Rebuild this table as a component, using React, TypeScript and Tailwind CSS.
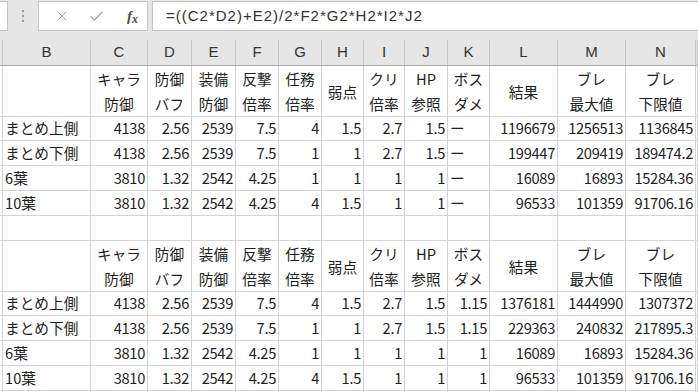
import { Check, X } from "lucide-react";

type Cell = string | [string, string];

const cols =
  "grid grid-cols-[3px_88px_57px_44px_44px_43px_43px_42px_41px_43px_42px_68px_68px_70px_1fr]";

const letters = ["", "B", "C", "D", "E", "F", "G", "H", "I", "J", "K", "L", "M", "N", ""];

const heads: Cell[] = [
  ["キャラ", "防御"],
  ["防御", "バフ"],
  ["装備", "防御"],
  ["反撃", "倍率"],
  ["任務", "倍率"],
  "弱点",
  ["クリ", "倍率"],
  ["HP", "参照"],
  ["ボス", "ダメ"],
  "結果",
  ["ブレ", "最大値"],
  ["ブレ", "下限値"],
];

const table1 = [
  ["まとめ上側", "4138", "2.56", "2539", "7.5", "4", "1.5", "2.7", "1.5", "ー", "1196679", "1256513", "1136845"],
  ["まとめ下側", "4138", "2.56", "2539", "7.5", "1", "1", "2.7", "1.5", "ー", "199447", "209419", "189474.2"],
  ["6葉", "3810", "1.32", "2542", "4.25", "1", "1", "1", "1", "ー", "16089", "16893", "15284.36"],
  ["10葉", "3810", "1.32", "2542", "4.25", "4", "1.5", "1", "1", "ー", "96533", "101359", "91706.16"],
];

const table2 = [
  ["まとめ上側", "4138", "2.56", "2539", "7.5", "4", "1.5", "2.7", "1.5", "1.15", "1376181", "1444990", "1307372"],
  ["まとめ下側", "4138", "2.56", "2539", "7.5", "1", "1", "2.7", "1.5", "1.15", "229363", "240832", "217895.3"],
  ["6葉", "3810", "1.32", "2542", "4.25", "1", "1", "1", "1", "1", "16089", "16893", "15284.36"],
  ["10葉", "3810", "1.32", "2542", "4.25", "4", "1.5", "1", "1", "1", "96533", "101359", "91706.16"],
];

const cell = "border-r border-b border-[#d4d4d4]";

function HeaderRow() {
  return (
    <div className={`${cols} h-[50px]`}>
      <div className={cell} />
      <div className={cell} />
      {heads.map((h, i) => (
        <div key={i} className={`${cell} flex flex-col items-center justify-center leading-[25px]`}>
          {typeof h === "string" ? (
            <span>{h}</span>
          ) : (
            <>
              <span>{h[0]}</span>
              <span>{h[1]}</span>
            </>
          )}
        </div>
      ))}
      <div className={cell} />
    </div>
  );
}

function DataRow({ row }: { row: string[] }) {
  return (
    <div className={`${cols} h-[25px]`}>
      <div className={cell} />
      {row.map((v, i) => {
        const isNum = /^[0-9.]+$/.test(v);
        return (
          <div
            key={i}
            className={`${cell} flex items-center whitespace-nowrap overflow-hidden ${
              isNum ? "justify-end pr-[2px] tracking-[-0.3px]" : "justify-start pl-[2px]"
            }`}
          >
            {v}
          </div>
        );
      })}
      <div className={cell} />
    </div>
  );
}

function EmptyRow({ h }: { h: string }) {
  return (
    <div className={`${cols} ${h}`}>
      {letters.map((_, i) => (
        <div key={i} className={cell} />
      ))}
    </div>
  );
}

export default function App() {
  return (
    <div className="w-[698px] h-[392px] overflow-hidden bg-white text-[#1e1e1e] text-[14.67px] font-['Noto_Sans_CJK_JP',sans-serif]">
      {/* formula bar */}
      <div className="h-[31px] bg-[#e6e6e6] flex items-start pt-[1px]">
        <div className="w-[8px] h-[30px] bg-white border border-l-0 border-[#c6c6c6]" />
        <div className="w-[30px] h-[30px] flex items-center justify-center">
          <svg width="4" height="14" viewBox="0 0 4 14">
            <circle cx="2" cy="2" r="1.2" fill="#9a9a9a" />
            <circle cx="2" cy="7" r="1.2" fill="#9a9a9a" />
            <circle cx="2" cy="12" r="1.2" fill="#9a9a9a" />
          </svg>
        </div>
        <div className="w-[110px] h-[30px] bg-white border border-[#c6c6c6] flex items-center">
          <div className="w-[39px] flex justify-center pl-[6px]">
            <X size={16} strokeWidth={1.5} color="#a6a6a6" />
          </div>
          <div className="w-[36px] flex justify-center">
            <Check size={17} strokeWidth={1.8} color="#a6a6a6" />
          </div>
          <div className="flex-1 flex items-end justify-center pl-[4px] text-[#505050] italic font-['Liberation_Serif',serif] leading-none">
            <span className="text-[15px] font-bold">f</span>
            <span className="text-[12px] font-bold translate-y-[1px]">x</span>
          </div>
        </div>
        <div className="ml-[4px] flex-1 h-[30px] bg-white border border-r-0 border-[#c6c6c6] flex items-center pl-[13px] text-[#333] text-[15px] tracking-[1px] font-['Liberation_Sans',sans-serif]">
          =((C2*D2)+E2)/2*F2*G2*H2*I2*J2
        </div>
      </div>

      {/* column letters */}
      <div className="h-[35px] bg-[#e6e6e6] pt-[9px] border-b border-[#ababab]">
        <div className={`${cols} h-[25px] font-['Liberation_Sans',sans-serif] text-[15px] text-[#333]`}>
          {letters.map((l, i) => (
            <div key={i} className="border-r border-[#c6c6c6] flex items-center justify-center">
              {l}
            </div>
          ))}
        </div>
      </div>

      <HeaderRow />
      {table1.map((r, i) => (
        <DataRow key={i} row={r} />
      ))}
      <EmptyRow h="h-[25px]" />
      <HeaderRow />
      {table2.map((r, i) => (
        <DataRow key={i} row={r} />
      ))}
      <EmptyRow h="h-[25px]" />
    </div>
  );
}
